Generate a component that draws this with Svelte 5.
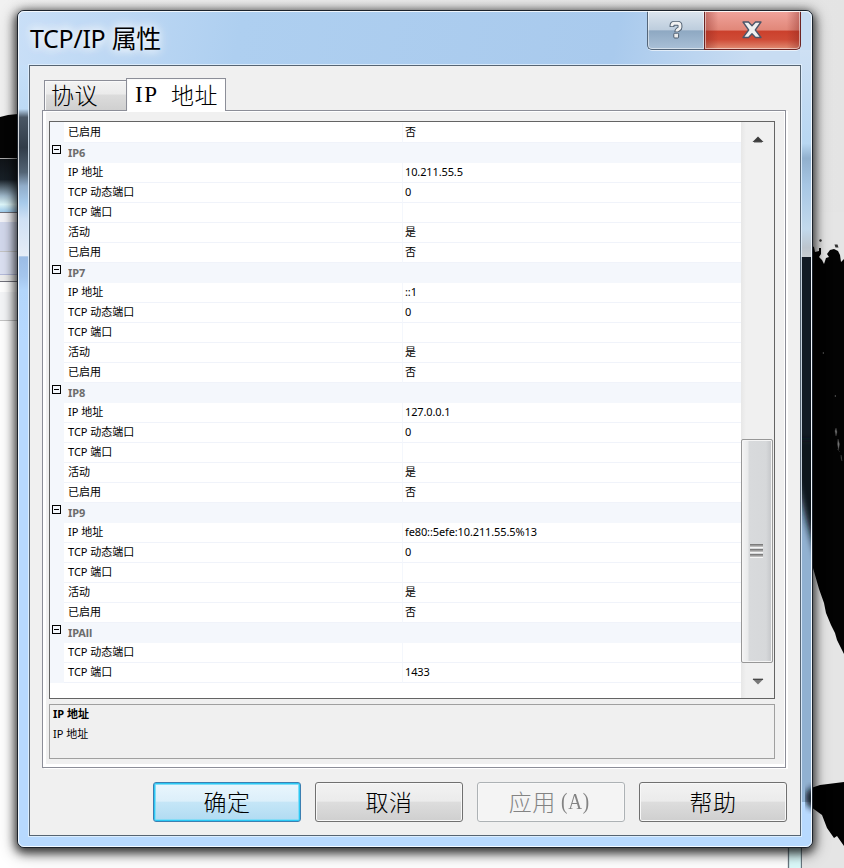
<script>
  const group = (name, address) => [
    { category: true, label: name },
    { label: 'IP 地址', value: address },
    { label: 'TCP 动态端口', value: '0' },
    { label: 'TCP 端口', value: '' },
    { label: '活动', value: '是' },
    { label: '已启用', value: '否' }
  ];
  const rows = [
    { label: '已启用', value: '否' },
    ...group('IP6', '10.211.55.5'),
    ...group('IP7', '::1'),
    ...group('IP8', '127.0.0.1'),
    ...group('IP9', 'fe80::5efe:10.211.55.5%13'),
    { category: true, label: 'IPAll' },
    { label: 'TCP 动态端口', value: '' },
    { label: 'TCP 端口', value: '1433' }
  ];
</script>

<main class="desktop">
  <svg class="wallpaper" width="844" height="868" viewBox="0 0 844 868" aria-hidden="true">
    <defs>
      <linearGradient id="paper" x1="0" y1="0" x2="1" y2="0">
        <stop offset="0" stop-color="#f1f1f1" /><stop offset="1" stop-color="#e4e4e4" />
      </linearGradient>
      <linearGradient id="glass" x1="0" y1="0" x2="0" y2="1">
        <stop offset="0" stop-color="#101418" /><stop offset=".4" stop-color="#182027" />
        <stop offset=".7" stop-color="#9fb9cb" /><stop offset=".86" stop-color="#dff8fb" /><stop offset="1" stop-color="#9ecbed" />
      </linearGradient>
    </defs>
    <rect width="844" height="868" fill="url(#paper)" />
    <path d="M0 117L8 115L18 114V160H0Z" fill="#050505" />
    <rect y="158" width="20" height="54" fill="url(#glass)" />
    <path d="M0 158.5H18" stroke="#aaa" />
    <rect y="212" width="789" height="656" fill="#fff" />
    <rect y="213" width="20" height="9" fill="#f3f3f8" />
    <rect y="222" width="20" height="30" fill="#d3d9ed" />
    <rect y="252" width="20" height="22" fill="#dce1f2" />
    <path d="M0 212.5H18M0 281.5H18" stroke="#72727c" />
    <path d="M0 251.5H18M0 320.5H18" stroke="#c4c4c4" />
    <path d="M0 274.5H18" stroke="#b5bbdb" />
    <rect y="275" width="20" height="6" fill="#eee" />
    <rect y="292" width="20" height="28" fill="#f5f6f8" />
    <path d="M789 848H801V868H789Z" fill="#dcfbfb" />
    <path d="M788.5 846V868M801.5 846V868" stroke="#687880" stroke-width="1.3" />
    <rect x="802" y="212" width="42" height="656" fill="#e5e5e5" />
    <path d="M812 246L814 247L815 252L819 251V248H821V254L819 257L822 260L824 264L826 258L829 257L827 254L830 250L834 249L838 251L840 255L841 262L844 259V654L837 640L835 633L831 625L826 613L824 603L819 589L813 568Z" fill="#030303" />
    <path d="M820 239l2 1-1 2-2-1ZM834.5 244.500l3 0 1 3-3 0Z" fill="#333" />
    <path d="M836 428l1 4-1 4-1-5ZM838 439l1.500 5-1 6-1-6ZM841 455l1 6-1-3ZM823 352l1 1-1 1ZM835 395l1 1-1 1ZM837 449l3 3" fill="#777" stroke="#444" stroke-width=".4" />
    <path d="M805 790L820 785L844 782V846L837 836L834 838L827 828L822 815L811 807Z" fill="#020202" />
  </svg>

  <section class="window" aria-label="TCP/IP 属性">
    <svg class="reflections" width="793" height="835" viewBox="18 11 793 835" aria-hidden="true">
      <defs>
        <linearGradient id="left-frame" gradientUnits="userSpaceOnUse" x1="0" y1="65" x2="0" y2="340">
          <stop offset="0" stop-color="#c6dff8" /><stop offset=".16" stop-color="#bddaf5" />
          <stop offset=".19" stop-color="#4a5765" /><stop offset=".30" stop-color="#313c49" />
          <stop offset=".39" stop-color="#536475" /><stop offset=".44" stop-color="#91adca" />
          <stop offset=".5" stop-color="#a7caea" /><stop offset=".56" stop-color="#cfe0f4" />
          <stop offset=".695" stop-color="#e6edf7" /><stop offset=".697" stop-color="#9bbce5" />
          <stop offset=".77" stop-color="#a5c6ed" /><stop offset=".82" stop-color="#b3d6fb" /><stop offset="1" stop-color="#b7d9fe" />
        </linearGradient>
        <linearGradient id="right-frame" gradientUnits="userSpaceOnUse" x1="0" y1="50" x2="0" y2="258">
          <stop offset="0" stop-color="#cee0f4" /><stop offset=".45" stop-color="#b8d7f2" />
          <stop offset=".52" stop-color="#91b0ce" /><stop offset=".65" stop-color="#a7c6e4" />
          <stop offset=".86" stop-color="#c2d9ec" /><stop offset=".95" stop-color="#bcc5ce" /><stop offset="1" stop-color="#c9ced2" />
        </linearGradient>
        <filter id="soft"><feGaussianBlur stdDeviation="3" /></filter>
      </defs>
      <rect x="18" y="65" width="12" height="275" fill="url(#left-frame)" />
      <rect x="800" y="50" width="12" height="208" fill="url(#right-frame)" />
      <rect x="800" y="257" width="12" height="545" fill="#91b1d1" />
      <rect x="800" y="257" width="12" height="200" fill="#111a24" />
      <path d="M796 440H818V563L806 520L796 480Z" fill="#08121c" filter="url(#soft)" />
      <path d="M816 785L806 792V804L816 811Z" fill="#071320" filter="url(#soft)" />
    </svg>

    <header class="titlebar">
      <h1>TCP/IP 属性</h1>
      <div class="caption">
        <button class="help" aria-label="帮助">
          <svg width="16" height="20" viewBox="0 0 16 20">
            <path d="M4 7V5.5Q4 3.3 6.3 3.3H9.7Q12 3.3 12 5.5V7.2Q12 8.4 10.9 9L9.7 9.8Q8.8 10.4 8.8 12" fill="none" stroke="#4c5c6e" stroke-width="4.8" />
            <path d="M4 6.2V5.5Q4 3.3 6.3 3.3H9.7Q12 3.3 12 5.5V7.2Q12 8.4 10.9 9L9.7 9.8Q8.8 10.4 8.8 11.4" fill="none" stroke="#f1f1f1" stroke-width="2.9" />
            <rect x="5.8" y="13.2" width="4.8" height="4.8" rx="1" fill="#eee" stroke="#4c5c6e" />
          </svg>
        </button>
        <button class="close" aria-label="关闭">
          <svg width="20" height="18" viewBox="0 0 20 18">
            <path d="M1 1H6.5L10 4.7L13.5 1H19L13.3 9L19 16.5H13.5L10 12.8L6.5 16.5H1L6.7 9Z" fill="#f0f0f0" stroke="#4c5568" stroke-width="1.3" stroke-linejoin="round" />
          </svg>
        </button>
      </div>
    </header>

    <div class="client">
      <nav class="tabs">
        <button class="tab">协议</button>
        <button class="tab active"><span class="latin">IP</span>地址</button>
      </nav>
      <div class="panel">
        <div class="grid">
          <div class="rows">
            {#each rows as row}
              <div class="row" class:category={row.category}>
                <div class="gutter">
                  {#if row.category}<span class="collapse"></span>{/if}
                </div>
                <div class="label">{row.label}</div>
                {#if !row.category}<div class="value">{row.value}</div>{/if}
              </div>
            {/each}
          </div>
          <div class="scrollbar">
            <svg class="up" width="12" height="7" viewBox="0 0 12 7"><path d="M0.5 6L6 .5L11.5 6Z" fill="#3c3c3c" /><path d="M2 6.4H10" stroke="#999" /></svg>
            <div class="thumb"><span></span><span></span><span></span></div>
            <svg class="down" width="12" height="7" viewBox="0 0 12 7"><path d="M0.5 1L6 6.5L11.5 1Z" fill="#777" /><path d="M1 1.2H11" stroke="#333" /></svg>
          </div>
        </div>
        <div class="description">
          <strong>IP 地址</strong>
          <span>IP 地址</span>
        </div>
      </div>
      <footer>
        <button class="action default">确定</button>
        <button class="action">取消</button>
        <button class="action" disabled>应用<span class="accel">(A)</span></button>
        <button class="action">帮助</button>
      </footer>
    </div>
  </section>
</main>

<style>
  :global(body) { margin: 0; overflow: hidden; }
  * { box-sizing: border-box; }
  button { font: inherit; color: inherit; padding: 0; margin: 0; }
  .desktop {
    position: relative; width: 844px; height: 868px; padding: 10px 0 0 17px; overflow: hidden;
    font-family: "Noto Sans", "Noto Sans CJK SC", sans-serif; color: #000;
  }
  .wallpaper { position: absolute; inset: 0; }
  .window {
    position: relative; width: 796px; height: 838px; padding: 0 11px;
    border: 1px solid #1b222b; border-radius: 7px;
    background: linear-gradient(100deg, #c9dff7 0, #aecff0 28%, #a9caed 75%, #c8dcf2 92%) 0 0 / 100% 56px no-repeat, #b7d9fe;
    box-shadow: 0 3px 10px 2px rgba(0,0,0,.72), 0 4px 17px 2px rgba(0,0,0,.3);
  }
  .window::after { content: ""; position: absolute; inset: 0; border: 1px solid rgba(255,255,255,.8); border-radius: 6px; pointer-events: none; }
  .reflections { position: absolute; left: 0; top: 0; }
  .titlebar { position: relative; height: 54px; display: flex; justify-content: space-between; }
  h1 {
    margin: 11px 0 0 1px; font-size: 25px; font-weight: 400; line-height: 32px; height: 32px; letter-spacing: -.3px; white-space: nowrap;
    font-family: "Noto Sans", "Noto Sans CJK SC", sans-serif;
    text-shadow: 0 0 8px #fff, 0 0 12px rgba(255,255,255,.8), 0 0 16px rgba(255,255,255,.7);
  }
  .caption { display: flex; height: 39px; }
  .caption button { height: 39px; display: flex; align-items: center; justify-content: center; box-shadow: inset 0 0 0 1px rgba(255,255,255,.5), 0 1px 0 rgba(255,255,255,.6); }
  .help { width: 57px; border: 1px solid #536579; border-top: 0; border-right: 0; border-radius: 0 0 0 5px; background: linear-gradient(#dce5ee, #bdcddd 50%, #8ea8c2 52%, #a9c0d7); }
  .caption .close { width: 97px; padding-right: 2px; border: 1px solid #6e2423; border-top: 0; border-radius: 0 0 5px 0; background: linear-gradient(90deg, rgba(130,35,30,.4), transparent 14%, transparent 86%, rgba(130,35,30,.4)), linear-gradient(#f0a49c, #e18779 50%, #cb402c 53%, #cf4b36 75%, #e18d73); }
  .client {
    position: relative; width: 772px; height: 771px; padding: 12px 13px 0 12px;
    border: 1px solid #566472; background: #f0f0f0; box-shadow: 0 0 0 1px rgba(226,240,253,.85);
  }
  .tabs { position: relative; z-index: 1; display: flex; align-items: flex-end; height: 33px; padding-left: 2px; font: 300 23px/30px "Noto Sans CJK SC", sans-serif; }
  .tab { height: 31px; width: 82px; padding: 0 0 3px 6px; text-align: left; border: 1px solid #8c8e98; border-right: 0; background: linear-gradient(#f3f3f3, #ebebeb 45%, #dcdcdc 48%, #d0d0d0); box-shadow: inset 1px 1px #fafafa; display: flex; align-items: center; white-space: nowrap; letter-spacing: .4px; }
  .tab.active { height: 33px; width: 100px; padding: 0 0 3px 8px; border-right: 1px solid #8c8e98; border-bottom: 0; background: #fff; }
  .latin { font: 23px/30px "Liberation Serif", serif; letter-spacing: 1.5px; width: 36px; padding-top: 2px; }
  .panel { height: 658px; width: 744px; margin-top: -1px; padding: 10px 6px 0; border: 1px solid #8c8e98; background: #f0f0f0; box-shadow: inset 3px 0 #fff, inset -1px 1px #fff, inset 0 -3px #fff, 2px 1px #fff; }
  .grid { display: flex; width: 726px; height: 578px; border: 1px solid #646464; background: #fff; }
  .rows { width: 691px; padding-top: 1px; background: linear-gradient(90deg, #f4f7fc 14px, transparent 14px) 0 0 / 100% 561px no-repeat; }
  .row { display: flex; height: 20px; font-size: 11px; line-height: 17px; }
  .gutter { width: 14px; flex: none; padding: 2px 0 0 2px; background: #f4f7fc; }
  .collapse { display: block; width: 9px; height: 9px; border: 1px solid #000; background: linear-gradient(#000, #000) center / 5px 1px no-repeat; }
  .label { width: 339px; padding-left: 4px; border-right: 1px solid #f4f7fc; border-bottom: 1px solid #f0f3fa; white-space: nowrap; }
  .value { flex: 1; padding-left: 2px; border-bottom: 1px solid #f0f3fa; white-space: nowrap; letter-spacing: -.12px; }
  .category { background: #f4f7fc; }
  .category .label { flex: 1; font-weight: 700; color: #6d6d6d; border: 0; line-height: 19px; letter-spacing: -.1px; }
  .scrollbar { width: 33px; height: 576px; background: linear-gradient(90deg, #e7e7e7, #f0f0f0 5px); display: flex; flex-direction: column; padding-right: 1px; align-items: center; }
  .up { margin: 14px 0 0 2px; flex: none; }
  .thumb { width: 32px; height: 224px; margin-top: 296px; padding-right: 1px; flex: none; border: 1px solid #979797; border-radius: 2px; box-shadow: inset 0 0 0 1px #f5f5f5; background: linear-gradient(90deg, #f4f4f4, #e9eaeb 6px, #d8dadc 7px, #d6d8da 24px, #c3c5c8); display: flex; flex-direction: column; align-items: center; justify-content: center; gap: 1px; }
  .thumb span { width: 13px; height: 4px; background: linear-gradient(#6c6c6c, #ccc); border-bottom: 1px solid #f5f5f5; }
  .down { margin: 15px 0 0 2px; flex: none; }
  .description { width: 726px; height: 55px; margin-top: 5px; padding: 0 3px; border: 1px solid #a0a0a0; display: flex; flex-direction: column; font-size: 11px; line-height: 20px; }
  .description strong { height: 20px; line-height: 18px; }
  .description span { line-height: 18px; }
  footer { display: flex; gap: 14px; margin: 14px 0 0 111px; }
  .action { width: 148px; height: 40px; display: flex; align-items: center; justify-content: center; padding-bottom: 2px; font: 300 23px/34px "Noto Sans CJK SC", sans-serif; letter-spacing: .5px; border: 1px solid #707070; border-radius: 3px; background: linear-gradient(#f2f2f2, #ebebeb 48%, #dddddd 50%, #cfcfcf); box-shadow: inset 0 0 0 1px #f8f8f8; }
  .default { border-color: #3c7fb1; background: linear-gradient(#eaf6fd, #dceffa 48%, #c5e6f7 50%, #b0dbf2); box-shadow: inset 0 0 0 1px #2bc8f4, inset 0 0 0 2px #83dcf7; }
  .action:disabled { color: #838383; border-color: #adb2b5; background: #f4f4f4; }
  .accel { font-family: "Liberation Serif", serif; font-size: 24px; letter-spacing: 1px; margin: 0 -4px 0 5px; transform: scaleX(.8); transform-origin: left; }
</style>
